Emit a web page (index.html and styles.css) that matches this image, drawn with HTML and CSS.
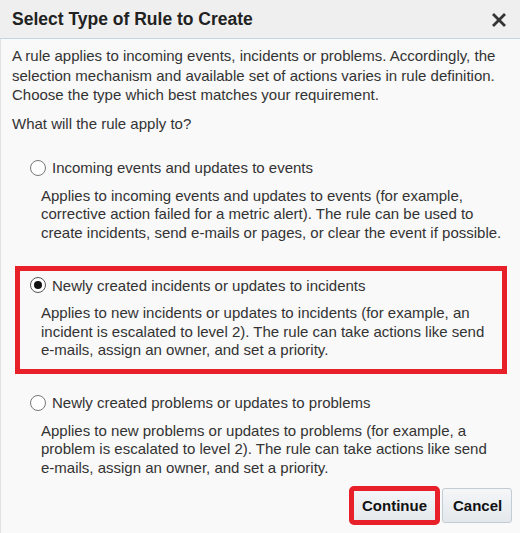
FILE: index.html
```html
<!DOCTYPE html>
<html>
<head>
<meta charset="utf-8">
<link rel="stylesheet" href="styles.css">
</head>
<body>
<div class="dialog">
  <div class="dialog-header">
    <h1 class="dialog-title">Select Type of Rule to Create</h1>
    <span class="close-btn" aria-label="Close">
      <svg width="14" height="14" viewBox="0 0 14 14"><path d="M2 2 L12 12 M12 2 L2 12" stroke="#333" stroke-width="2.8" stroke-linecap="square" fill="none"/></svg>
    </span>
  </div>
  <div class="dialog-body">
    <p class="intro">A rule applies to incoming events, incidents or problems. Accordingly, the selection mechanism and available set of actions varies in rule definition. Choose the type which best matches your requirement.</p>
    <p class="question">What will the rule apply to?</p>

    <div class="option">
      <div class="option-label"><span class="radio"></span><span>Incoming events and updates to events</span></div>
      <p class="option-desc">Applies to incoming events and updates to events (for example, corrective action failed for a metric alert). The rule can be used to create incidents, send e-&#8288;mails or pages, or clear the event if possible.</p>
    </div>

    <div class="option option-selected">
      <div class="option-label"><span class="radio radio-checked"></span><span>Newly created incidents or updates to incidents</span></div>
      <p class="option-desc">Applies to new incidents or updates to incidents (for example, an incident is escalated to level 2). The rule can take actions like send e-&#8288;mails, assign an owner, and set a priority.</p>
    </div>

    <div class="option">
      <div class="option-label"><span class="radio"></span><span>Newly created problems or updates to problems</span></div>
      <p class="option-desc">Applies to new problems or updates to problems (for example, a problem is escalated to level 2). The rule can take actions like send e-&#8288;mails, assign an owner, and set a priority.</p>
    </div>

    <div class="dialog-footer">
      <button class="btn btn-highlight">Continue</button>
      <button class="btn btn-cancel">Cancel</button>
    </div>
  </div>
</div>
</body>
</html>
```

FILE: styles.css
```css
* { box-sizing: border-box; }
html, body { margin: 0; padding: 0; }
body {
  width: 520px;
  height: 533px;
  overflow: hidden;
  font-family: "Liberation Sans", Arial, sans-serif;
  color: #333;
  background: #f9f9f9;
}
.dialog {
  width: 520px;
  height: 533px;
  display: flex;
  flex-direction: column;
}
.dialog-header {
  height: 39px;
  flex: none;
  background: #efefef;
  border-bottom: 1px solid #c4d4e1;
  display: flex;
  align-items: center;
  justify-content: space-between;
  padding: 0 14px 0 12px;
}
.dialog-title {
  margin: 0;
  font-size: 17.5px;
  font-weight: bold;
  color: #222;
}
.close-btn {
  display: flex;
  width: 14px;
  height: 14px;
  margin-top: 1px;
}
.dialog-body {
  flex: 1;
  background: #f9f9f9;
  border-left: 1px solid #e2e2e2;
  padding: 7px 0 0 11px;
  font-size: 15px;
}
.intro {
  margin: 0;
  padding-right: 12px;
  line-height: 19.5px;
}
.question {
  margin: 9.5px 0 0 0;
  line-height: 19.5px;
}
.option {
  position: relative;
  margin: 19.5px 8px 0 8px;
  padding: 5px 0 9px 10px;
}
.option-selected::before {
  content: "";
  position: absolute;
  left: -5px;
  top: -5px;
  bottom: -5px;
  width: 482px;
  border: 5px solid #e8202a;
  pointer-events: none;
}
.option-label {
  display: flex;
  align-items: center;
  gap: 6px;
  height: 19px;
  line-height: 19px;
  color: #333;
}
.radio {
  width: 16px;
  height: 16px;
  border-radius: 50%;
  border: 1px solid #777;
  background: #fff;
  flex: none;
  display: flex;
  align-items: center;
  justify-content: center;
}
.radio-checked {
  border: 1.5px solid #555;
}
.radio-checked::after {
  content: "";
  width: 8px;
  height: 8px;
  border-radius: 50%;
  background: #111;
}
.option-desc {
  margin: 9.5px 0 0 11px;
  line-height: 18.5px;
}
.dialog-footer {
  display: flex;
  justify-content: flex-end;
  gap: 4px;
  margin-top: 2px;
  padding-right: 8px;
}
.btn {
  height: 35px;
  padding: 0 10px;
  font-family: "Liberation Sans", Arial, sans-serif;
  font-size: 15px;
  font-weight: bold;
  color: #111;
  background: linear-gradient(#f4f6f8, #e4e8ec);
  border: 1px solid #c3cbd3;
  border-radius: 3px;
}
.btn-cancel { width: 70px; }
.btn-highlight {
  width: 87px;
  outline: 5px solid #e8202a;
  outline-offset: -3px;
}
```
